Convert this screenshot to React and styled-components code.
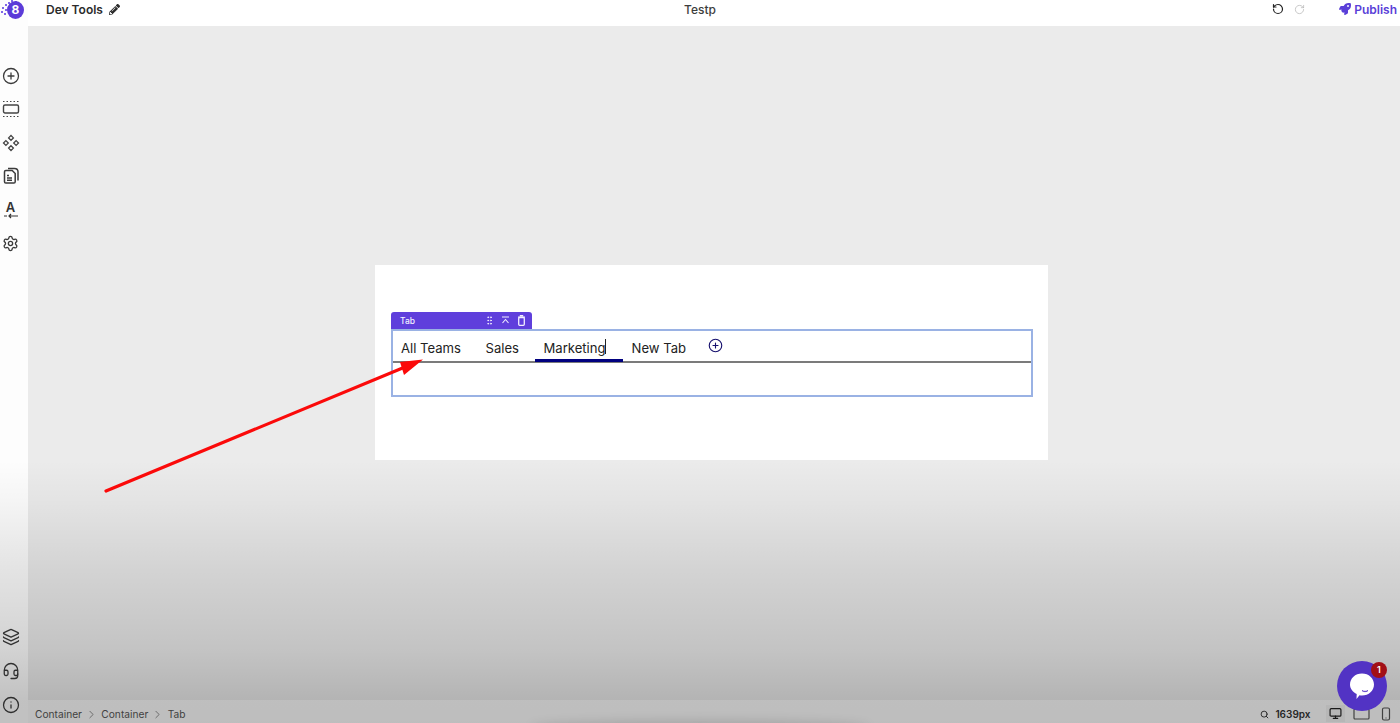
import styled, { createGlobalStyle } from "styled-components";
import {
  CirclePlus,
  Layers,
  Headset,
  Info,
  Settings,
  RotateCcw,
  RotateCw,
  ChevronRight,
  Search,
  Monitor,
  GripVertical,
} from "lucide-react";
import { FaPencilAlt, FaRocket } from "react-icons/fa";

const GlobalStyle = createGlobalStyle`
  html, body {
    margin: 0;
    padding: 0;
    height: 100%;
    overflow: hidden;
    background: #ebebeb;
    font-family: Inter, "Liberation Sans", sans-serif;
  }
`;

const Page = styled.div`
  position: relative;
  width: 1400px;
  height: 723px;
  overflow: hidden;
  display: flex;
`;

const Rail = styled.aside`
  width: 28px;
  flex: none;
  background: #fdfdfd;
  display: flex;
  flex-direction: column;
  align-items: flex-start;
  padding-bottom: 9.5px;
  box-sizing: border-box;
`;

const Logo = styled.div`
  height: 66.5px;
  width: 28px;
  position: relative;
  flex: none;
`;

const LogoDisc = styled.div`
  position: absolute;
  left: 7px;
  top: 1px;
  width: 17px;
  height: 18px;
  border-radius: 50%;
  background: #5b3bd8;
  color: #fff;
  font-size: 12px;
  font-weight: 700;
  line-height: 18px;
  text-align: center;
`;

const DotsSvg = styled.svg`
  position: absolute;
  left: 0;
  top: 0;
`;

const RailGroup = styled.div`
  display: flex;
  flex-direction: column;
  align-items: center;
  gap: 15.6px;
  color: #3b3b3b;
`;

const RailSlot = styled.div`
  height: 18px;
  width: 21px;
  display: flex;
  flex-direction: column;
  align-items: center;
  justify-content: center;
`;

const FontLetter = styled.span`
  font-size: 13px;
  font-weight: 600;
  line-height: 12px;
  color: #333;
`;

const RailSpacer = styled.div`
  flex: 1;
`;

const Main = styled.div`
  flex: 1;
  display: flex;
  flex-direction: column;
  min-width: 0;
`;

const TopBar = styled.header`
  height: 26px;
  flex: none;
  background: #fff;
  display: flex;
  align-items: center;
  padding: 0 3px 8px 18px;
  box-sizing: border-box;
  color: #2c2c2c;
  font-size: 12px;
`;

const Title = styled.div`
  display: flex;
  align-items: center;
  gap: 6px;
  font-weight: 600;
  width: 337px;
`;

const PageName = styled.div`
  flex: 1;
  padding-left: 301px;
  color: #3d3d3d;
  font-weight: 500;
`;

const History = styled.div`
  display: flex;
  align-items: center;
  gap: 10px;
  margin-right: 34px;
`;

const PublishButton = styled.div`
  display: flex;
  align-items: center;
  gap: 3px;
  color: #5a3fd8;
  font-weight: 600;
`;

const Canvas = styled.main`
  flex: 1;
  background: #ebebeb;
  padding: 239px 0 0 347px;
  box-sizing: border-box;
`;

const Card = styled.section`
  width: 673px;
  height: 195px;
  background: #fff;
  padding: 64px 16px 0;
  box-sizing: border-box;
`;

const Widget = styled.div`
  position: relative;
  width: 641.5px;
  height: 68px;
  box-sizing: border-box;
  border: 2px solid #9ab2e4;
`;

const WidgetTag = styled.div`
  position: absolute;
  left: -2px;
  top: -19px;
  width: 141px;
  height: 17px;
  background: #5f3fdc;
  border-radius: 3px 3px 0 0;
  display: flex;
  align-items: center;
  padding: 0 5px 0 9px;
  box-sizing: border-box;
  color: #f2efff;
  font-size: 8.5px;
  font-weight: 500;
`;

const TagActions = styled.div`
  margin-left: auto;
  display: flex;
  align-items: center;
  gap: 5px;
`;

const TabStrip = styled.div`
  height: 30px;
  display: flex;
  align-items: stretch;
  gap: 8.5px;
  border-bottom: 2px solid #7b7b7b;
`;

const TabItem = styled.div`
  position: relative;
  display: flex;
  align-items: center;
  padding: 6px ${(p) => (p.$active ? "17px" : "8px")} 0 8px;
  margin-right: ${(p) => (p.$active ? "-7.5px" : "0")};
  color: #222;
  font-size: 13.1px;
  white-space: nowrap;
  margin-bottom: -1px;
  border-bottom: 3px solid ${(p) => (p.$active ? "#00007f" : "transparent")};
`;

const Caret = styled.span`
  position: absolute;
  left: 70px;
  top: 8px;
  width: 1px;
  height: 15px;
  background: #222;
`;

const AddTab = styled.div`
  display: flex;
  align-items: center;
  color: #16106e;
  margin: 0 0 2px 5px;
`;

const StatusBar = styled.footer`
  height: 23px;
  flex: none;
  background: #f9f9f9;
  display: flex;
  align-items: center;
  padding: 5px 9px 0 7px;
  box-sizing: border-box;
  font-size: 10.2px;
  color: #555;
`;

const Crumbs = styled.div`
  display: flex;
  align-items: center;
  gap: 3.2px;
  flex: 1;
`;

const Zoom = styled.div`
  display: flex;
  align-items: center;
  gap: 6px;
  font-size: 10px;
  font-weight: 600;
  color: #333;
  margin-right: 15.5px;
`;

const Devices = styled.div`
  display: flex;
  align-items: center;
  gap: 11px;
`;

const DeviceActive = styled.div`
  display: flex;
  padding: 2px 3px;
  margin: -2px -3px 0 0;
  background: rgba(0, 0, 0, 0.04);
  color: #222;
`;

const Shade = styled.div`
  position: absolute;
  inset: 0;
  pointer-events: none;
  background: linear-gradient(
    to bottom,
    rgba(0, 0, 0, 0) 0,
    rgba(0, 0, 0, 0) 460px,
    rgba(0, 0, 0, 0.03) 500px,
    rgba(0, 0, 0, 0.1) 570px,
    rgba(0, 0, 0, 0.17) 650px,
    rgba(0, 0, 0, 0.234) 700px,
    rgba(0, 0, 0, 0.24) 723px
  );
`;

const BottomSmudge = styled.div`
  position: absolute;
  left: 530px;
  top: 719px;
  width: 340px;
  height: 14px;
  border-radius: 50%;
  background: rgba(0, 0, 0, 0.1);
  filter: blur(4px);
  pointer-events: none;
`;

const Arrow = styled.svg`
  position: absolute;
  left: 0;
  top: 0;
  pointer-events: none;
`;

const Chat = styled.div`
  position: absolute;
  left: 1337px;
  top: 661px;
  width: 50px;
  height: 50px;
  border-radius: 50%;
  background: #5233c4;
`;

const ChatBadge = styled.div`
  position: absolute;
  right: 0;
  top: 1px;
  width: 16px;
  height: 16px;
  border-radius: 50%;
  background: #a20f16;
  color: #fff;
  font-size: 9px;
  font-weight: 600;
  line-height: 16px;
  text-align: center;
`;

const icon = { size: 18, strokeWidth: 1.7 };

function LogoDots() {
  const dots = [
    [2, 7], [5, 4], [8, 2], [11, 0], [5, 9], [1, 11], [8, 6], [4, 13], [12, 4], [15, 1],
  ];
  return (
    <DotsSvg width="18" height="16">
      {dots.map(([x, y]) => (
        <rect key={`${x}-${y}`} x={x} y={y} width="2" height="2" fill="#7f66e6" />
      ))}
    </DotsSvg>
  );
}

function FrameIcon() {
  return (
    <svg width="18" height="18" viewBox="0 0 18 18" fill="none" stroke="#444">
      <path d="M1 1.5h16M1 16.5h16" strokeDasharray="1.5 2" />
      <rect x="1.5" y="5" width="15" height="8" rx="1.5" strokeWidth="1.4" />
    </svg>
  );
}

function ComponentsIcon() {
  return (
    <svg width="18" height="18" viewBox="0 0 18 18" fill="none" stroke="#444" strokeWidth="1.3">
      <path d="M9 1.5l2.4 2.4L9 6.3 6.6 3.9zM3.9 6.6l2.4 2.4-2.4 2.4L1.5 9zM14.1 6.6L16.5 9l-2.4 2.4L11.7 9zM9 11.7l2.4 2.4L9 16.5l-2.4-2.4z" />
    </svg>
  );
}

function PagesIcon() {
  return (
    <svg width="18" height="18" viewBox="0 0 18 18" fill="none" stroke="#3b3b3b" strokeWidth="1.5">
      <path d="M6 1.5h6.5c2 0 3.5 1.5 3.5 3.5v8.5" />
      <path d="M2.5 4.8c0-.8.6-1.3 1.3-1.3h6.4l3 3v8.2c0 .8-.6 1.3-1.3 1.3H3.8c-.7 0-1.3-.5-1.3-1.3z" />
      <path d="M5 8.5h2M5 11h5M5 13.2h5" />
    </svg>
  );
}

function SpacingLine() {
  return (
    <svg width="18" height="6" viewBox="0 0 18 6" fill="none" stroke="#333" strokeWidth="1.2">
      <path d="M2 3h3M7 3h9M9 1L7 3l2 2" />
    </svg>
  );
}

function CollapseIcon() {
  return (
    <svg width="11" height="11" viewBox="0 0 11 11" fill="none" stroke="currentColor" strokeWidth="1.1">
      <path d="M2 2h7M2.5 8l3-3.5 3 3.5" />
    </svg>
  );
}

function TrashIcon() {
  return (
    <svg width="11" height="11" viewBox="0 0 11 11" fill="none" stroke="currentColor" strokeWidth="1.3">
      <path d="M3.8.7h3.4M2 2.2h7" />
      <rect x="2.7" y="2.5" width="5.6" height="7.8" rx="1" />
    </svg>
  );
}

function TabletIcon() {
  return (
    <svg width="17" height="14" viewBox="0 0 17 14" fill="none" stroke="#555" strokeWidth="1.2">
      <rect x="1" y="2" width="15" height="10" rx="1" />
    </svg>
  );
}

function PhoneIcon() {
  return (
    <svg width="10" height="14" viewBox="0 0 10 14" fill="none" stroke="#555" strokeWidth="1.2">
      <rect x="1.5" y="1" width="7" height="12" rx="1.5" />
      <path d="M4.5 11h1" />
    </svg>
  );
}

function ChatBubble() {
  return (
    <svg width="50" height="50" viewBox="0 0 50 50">
      <path
        d="M25 12.5c6.8 0 12 4.8 12 11s-5.2 11-12 11c-.9 0-1.7-.1-2.5-.2L19.5 38l.2-5C15.7 31 13 27.5 13 23.5c0-6.2 5.2-11 12-11z"
        fill="#fff"
      />
      <path d="M25 29.5c1.8 1 4.2 1 6 0-1 1.6-5 1.6-6 0z" fill="#5233c4" stroke="#5233c4" strokeWidth="0.6" />
    </svg>
  );
}

export default function App() {
  return (
    <Page>
      <GlobalStyle />
      <Rail>
        <Logo>
          <LogoDots />
          <LogoDisc>8</LogoDisc>
        </Logo>
        <RailGroup>
          <RailSlot><CirclePlus {...icon} /></RailSlot>
          <RailSlot><FrameIcon /></RailSlot>
          <RailSlot><ComponentsIcon /></RailSlot>
          <RailSlot><PagesIcon /></RailSlot>
          <RailSlot>
            <FontLetter>A</FontLetter>
            <SpacingLine />
          </RailSlot>
          <RailSlot><Settings size={17} strokeWidth={1.9} /></RailSlot>
        </RailGroup>
        <RailSpacer />
        <RailGroup>
          <RailSlot><Layers {...icon} /></RailSlot>
          <RailSlot><Headset {...icon} /></RailSlot>
          <RailSlot><Info {...icon} /></RailSlot>
        </RailGroup>
      </Rail>
      <Main>
        <TopBar>
          <Title>
            Dev Tools
            <FaPencilAlt size={11} />
          </Title>
          <PageName>Testp</PageName>
          <History>
            <RotateCcw size={12} strokeWidth={2.4} color="#222" />
            <RotateCw size={11} strokeWidth={1.6} color="#b5b5b5" />
          </History>
          <PublishButton>
            <FaRocket size={12} />
            Publish
          </PublishButton>
        </TopBar>
        <Canvas>
          <Card>
            <Widget>
              <WidgetTag>
                Tab
                <TagActions>
                  <GripVertical size={11} strokeWidth={2} />
                  <CollapseIcon />
                  <TrashIcon />
                </TagActions>
              </WidgetTag>
              <TabStrip>
                <TabItem>All Teams</TabItem>
                <TabItem>Sales</TabItem>
                <TabItem $active>
                  Marketing
                  <Caret />
                </TabItem>
                <TabItem>New Tab</TabItem>
                <AddTab><CirclePlus size={15} strokeWidth={1.8} /></AddTab>
              </TabStrip>
            </Widget>
          </Card>
        </Canvas>
        <StatusBar>
          <Crumbs>
            <span>Container</span>
            <ChevronRight size={13} strokeWidth={1.2} />
            <span>Container</span>
            <ChevronRight size={13} strokeWidth={1.2} />
            <span>Tab</span>
          </Crumbs>
          <Zoom>
            <Search size={9} strokeWidth={2.5} />
            1639px
          </Zoom>
          <Devices>
            <DeviceActive><Monitor size={13} strokeWidth={2.2} /></DeviceActive>
            <TabletIcon />
            <PhoneIcon />
          </Devices>
        </StatusBar>
      </Main>
      <Shade />
      <BottomSmudge />
      <Arrow width="1400" height="723" viewBox="0 0 1400 723">
        <path d="M106 491L405 367" stroke="#fb0a0a" strokeWidth="3.2" strokeLinecap="round" />
        <path d="M423 359.5L400 362L404 375z" fill="#fb0a0a" />
      </Arrow>
      <Chat>
        <ChatBubble />
        <ChatBadge>1</ChatBadge>
      </Chat>
    </Page>
  );
}
